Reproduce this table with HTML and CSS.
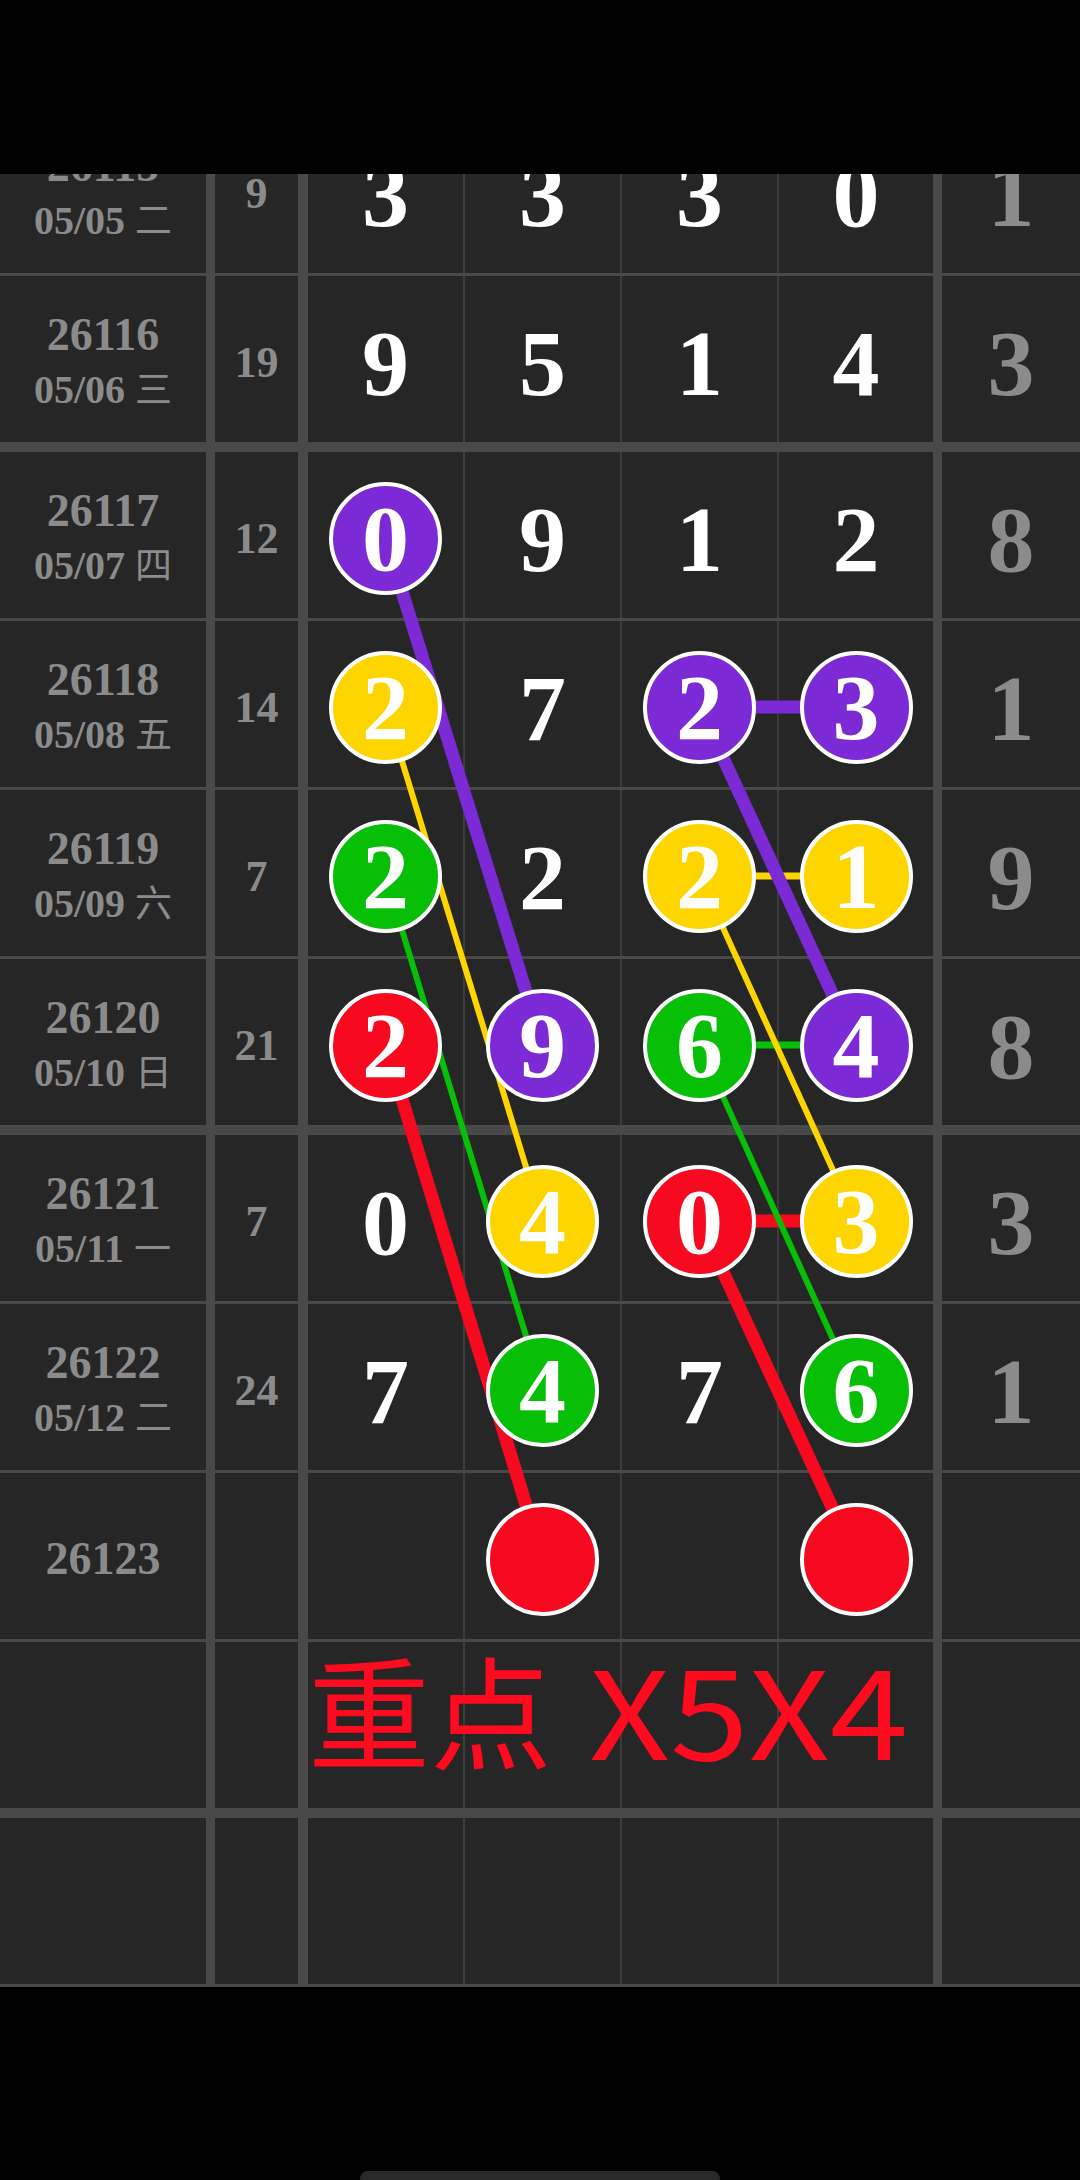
FILE: index.html
```html
<!DOCTYPE html>
<html lang="zh">
<head>
  <meta charset="UTF-8" />
  <meta name="viewport" content="width=device-width, initial-scale=1.0">
  <title>走势图</title>
  <link rel="stylesheet" href="styles.css">
</head>
<body>

  <div class="status"></div>

  <div class="board">
    <div class="table">

      <svg class="links" width="1080" height="1880" viewBox="0 0 1080 1880">
        <!-- horizontal pairs first -->
        <line x1="699.5" y1="600" x2="856" y2="600" stroke="#7b2ad6" stroke-width="13" />
        <line x1="699.5" y1="769" x2="856" y2="769" stroke="#ffd500" stroke-width="7" />
        <line x1="699.5" y1="938" x2="856" y2="938" stroke="#06bf06" stroke-width="7" />
        <line x1="699.5" y1="1114" x2="856" y2="1114" stroke="#f70a1f" stroke-width="13" />
        <!-- left diagonals -->
        <line x1="385.5" y1="431" x2="542.5" y2="938" stroke="#7b2ad6" stroke-width="13" />
        <line x1="385.5" y1="600" x2="542.5" y2="1114" stroke="#ffd500" stroke-width="6" />
        <line x1="385.5" y1="769" x2="542.5" y2="1283" stroke="#06bf06" stroke-width="6" />
        <line x1="385.5" y1="938" x2="542.5" y2="1452" stroke="#f70a1f" stroke-width="13" />
        <!-- right diagonals -->
        <line x1="699.5" y1="600" x2="856" y2="938" stroke="#7b2ad6" stroke-width="13" />
        <line x1="699.5" y1="769" x2="856" y2="1114" stroke="#ffd500" stroke-width="6" />
        <line x1="699.5" y1="938" x2="856" y2="1283" stroke="#06bf06" stroke-width="6" />
        <line x1="699.5" y1="1114" x2="856" y2="1452" stroke="#f70a1f" stroke-width="13" />
      </svg>

      <div class="row">
        <div class="cell c-issue"><b>26115</b><span class="date">05/05 <i>二</i></span></div>
        <div class="cell c-sum">9</div>
        <div class="cell c-n1"><span class="num">3</span></div>
        <div class="cell c-n"><span class="num">3</span></div>
        <div class="cell c-n"><span class="num">3</span></div>
        <div class="cell c-n"><span class="num">0</span></div>
        <div class="cell c-extra"><span class="num">1</span></div>
      </div>

      <div class="row thick">
        <div class="cell c-issue"><b>26116</b><span class="date">05/06 <i>三</i></span></div>
        <div class="cell c-sum">19</div>
        <div class="cell c-n1"><span class="num">9</span></div>
        <div class="cell c-n"><span class="num">5</span></div>
        <div class="cell c-n"><span class="num">1</span></div>
        <div class="cell c-n"><span class="num">4</span></div>
        <div class="cell c-extra"><span class="num">3</span></div>
      </div>

      <div class="row">
        <div class="cell c-issue"><b>26117</b><span class="date">05/07 <i>四</i></span></div>
        <div class="cell c-sum">12</div>
        <div class="cell c-n1"><span class="ball purple">0</span></div>
        <div class="cell c-n"><span class="num">9</span></div>
        <div class="cell c-n"><span class="num">1</span></div>
        <div class="cell c-n"><span class="num">2</span></div>
        <div class="cell c-extra"><span class="num">8</span></div>
      </div>

      <div class="row">
        <div class="cell c-issue"><b>26118</b><span class="date">05/08 <i>五</i></span></div>
        <div class="cell c-sum">14</div>
        <div class="cell c-n1"><span class="ball yellow">2</span></div>
        <div class="cell c-n"><span class="num">7</span></div>
        <div class="cell c-n"><span class="ball purple">2</span></div>
        <div class="cell c-n"><span class="ball purple">3</span></div>
        <div class="cell c-extra"><span class="num">1</span></div>
      </div>

      <div class="row">
        <div class="cell c-issue"><b>26119</b><span class="date">05/09 <i>六</i></span></div>
        <div class="cell c-sum">7</div>
        <div class="cell c-n1"><span class="ball green">2</span></div>
        <div class="cell c-n"><span class="num">2</span></div>
        <div class="cell c-n"><span class="ball yellow">2</span></div>
        <div class="cell c-n"><span class="ball yellow">1</span></div>
        <div class="cell c-extra"><span class="num">9</span></div>
      </div>

      <div class="row thick">
        <div class="cell c-issue"><b>26120</b><span class="date">05/10 <i>日</i></span></div>
        <div class="cell c-sum">21</div>
        <div class="cell c-n1"><span class="ball red">2</span></div>
        <div class="cell c-n"><span class="ball purple">9</span></div>
        <div class="cell c-n"><span class="ball green">6</span></div>
        <div class="cell c-n"><span class="ball purple">4</span></div>
        <div class="cell c-extra"><span class="num">8</span></div>
      </div>

      <div class="row">
        <div class="cell c-issue"><b>26121</b><span class="date">05/11 <i>一</i></span></div>
        <div class="cell c-sum">7</div>
        <div class="cell c-n1"><span class="num">0</span></div>
        <div class="cell c-n"><span class="ball yellow">4</span></div>
        <div class="cell c-n"><span class="ball red">0</span></div>
        <div class="cell c-n"><span class="ball yellow">3</span></div>
        <div class="cell c-extra"><span class="num">3</span></div>
      </div>

      <div class="row">
        <div class="cell c-issue"><b>26122</b><span class="date">05/12 <i>二</i></span></div>
        <div class="cell c-sum">24</div>
        <div class="cell c-n1"><span class="num">7</span></div>
        <div class="cell c-n"><span class="ball green">4</span></div>
        <div class="cell c-n"><span class="num">7</span></div>
        <div class="cell c-n"><span class="ball green">6</span></div>
        <div class="cell c-extra"><span class="num">1</span></div>
      </div>

      <div class="row">
        <div class="cell c-issue"><b>26123</b></div>
        <div class="cell c-sum"></div>
        <div class="cell c-n1"></div>
        <div class="cell c-n"><span class="ball red"></span></div>
        <div class="cell c-n"></div>
        <div class="cell c-n"><span class="ball red"></span></div>
        <div class="cell c-extra"></div>
      </div>

      <div class="row thick">
        <div class="cell c-issue"></div>
        <div class="cell c-sum"></div>
        <div class="cell c-n1"></div>
        <div class="cell c-n"></div>
        <div class="cell c-n"></div>
        <div class="cell c-n"></div>
        <div class="cell c-extra"></div>
        <div class="note">重点 <span>X5X4</span></div>
      </div>

      <div class="row">
        <div class="cell c-issue"></div>
        <div class="cell c-sum"></div>
        <div class="cell c-n1"></div>
        <div class="cell c-n"></div>
        <div class="cell c-n"></div>
        <div class="cell c-n"></div>
        <div class="cell c-extra"></div>
      </div>

    </div>
  </div>

  <div class="footer">
    <div class="home-bar"></div>
  </div>

</body>
</html>
```

FILE: styles.css
```css
* {
  box-sizing: border-box;
}

body {
  margin: 0;
  width: 1080px;
  background-color: #000;
  font-family: "Liberation Serif", "Noto Sans CJK SC", serif;
}

.status {
  height: 174px;
  background-color: #000;
}

.board {
  overflow: hidden;
}

.table {
  position: relative;
  margin-top: -67px;
}

.links {
  position: absolute;
  left: 0;
  top: 0;
  z-index: 1;
}

.row {
  display: grid;
  grid-template-columns: 206px 92px 165px 157px 157px 156px 1fr;
  height: 169px;
  background-color: #262626;
  border-bottom: 3px solid #484948;
}

.row.thick {
  height: 176px;
  border-bottom-width: 10px;
}

.cell {
  display: flex;
  align-items: center;
  justify-content: center;
  padding-top: 6px;
  grid-row: 1;
}

/* fixed columns so the note can sit on top of them */
.c-issue { grid-column: 1; }
.c-sum { grid-column: 2; }
.c-n1 { grid-column: 3; }
.c-n:nth-child(4) { grid-column: 4; }
.c-n:nth-child(5) { grid-column: 5; }
.c-n:nth-child(6) { grid-column: 6; }
.c-extra { grid-column: 7; }

.c-issue {
  flex-direction: column;
  color: #8b8b8b;
  font-weight: bold;
}

.c-issue b {
  font-size: 46px;
  line-height: 52px;
}

.c-issue .date {
  font-size: 40px;
  line-height: 52px;
}

.c-issue .date i {
  font-style: normal;
  font-weight: normal;
  font-family: "Noto Sans CJK SC", sans-serif;
  font-size: 37px;
}

.c-sum {
  border-left: 9px solid #484948;
  color: #8b8b8b;
  font-weight: bold;
  font-size: 44px;
}

.c-n1 {
  border-left: 10px solid #484948;
}

.c-n {
  border-left: 2px solid #3c3c3c;
}

.c-extra {
  border-left: 9px solid #484948;
}

.num {
  color: #fff;
  font-size: 94px;
  font-weight: bold;
  line-height: 1;
  padding-top: 2px;
}

.c-extra .num {
  color: #8b8b8b;
}

.ball {
  position: relative;
  z-index: 2;
  display: flex;
  align-items: center;
  justify-content: center;
  width: 113px;
  height: 113px;
  border: 4px solid #fff;
  border-radius: 50%;
  color: #fff;
  font-size: 94px;
  font-weight: bold;
  line-height: 1;
}

.purple { background-color: #7b2ad6; }
.yellow { background-color: #ffd500; }
.green  { background-color: #06bf06; }
.red    { background-color: #f70a1f; }

.note {
  grid-column: 3 / 7;
  grid-row: 1;
  z-index: 2;
  align-self: center;
  padding-left: 10px;
  padding-bottom: 36px;
  color: #ff0a1e;
  font-family: "Noto Sans CJK SC", sans-serif;
  font-size: 122px;
  line-height: 1;
  white-space: nowrap;
  word-spacing: 10px;
}

.note span {
  display: inline-block;
  transform: scaleX(1.16);
  transform-origin: left center;
}

.footer {
  height: 193px;
  overflow: hidden;
}

.home-bar {
  width: 360px;
  height: 16px;
  margin: 184px auto 0;
  border-radius: 8px;
  background-color: #2a2a2a;
}
```
